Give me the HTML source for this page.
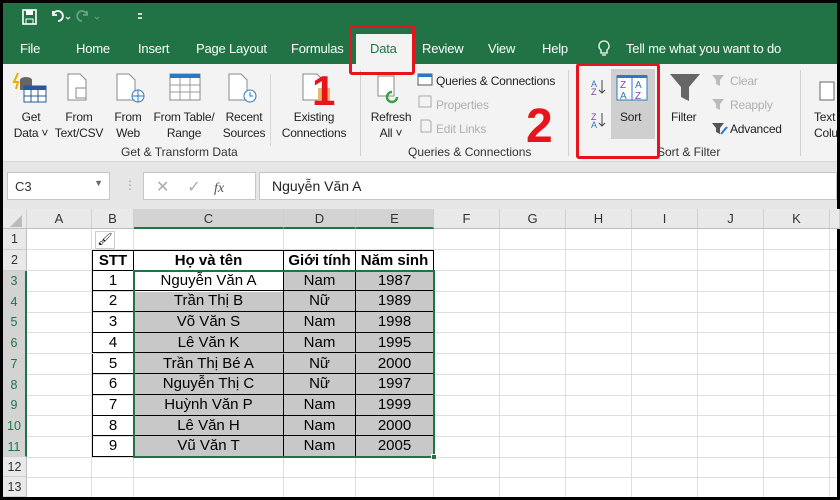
<!DOCTYPE html><html><head><meta charset="utf-8"><style>
*{margin:0;padding:0;box-sizing:border-box}
body{width:840px;height:500px;background:#000;font-family:"Liberation Sans",Arial,sans-serif;position:relative;overflow:hidden}
.a{position:absolute}
#top{left:3px;top:3px;width:834px;height:61px;background:#217346}
.tab{position:absolute;top:41px;color:#fff;font-size:13px;letter-spacing:-0.2px}
#rib{left:3px;top:64px;width:834px;height:98px;background:#f3f3f3;border-bottom:1px solid #d6d6d6}
.rt{position:absolute;font-size:12px;color:#222;text-align:center;line-height:16px;letter-spacing:-0.2px;white-space:nowrap}
.gl{position:absolute;top:145px;font-size:12px;color:#333}
#fb{left:3px;top:162px;width:834px;height:47px;background:#e6e6e6}
.box{position:absolute;background:#fff;border:1px solid #c6c6c6}
#grid{left:3px;top:209px;width:834px;height:288px;background:#fff}
.ch{position:absolute;top:0;height:20px;background:#e9e9e9;border-right:1px solid #cfcfcf;border-bottom:1px solid #bdbdbd;font-size:13px;color:#333;text-align:center;line-height:20px}
.rh{position:absolute;left:0;width:24px;background:#e9e9e9;border-bottom:1px solid #cfcfcf;border-right:1px solid #bdbdbd;font-size:12.5px;color:#333;text-align:center}
.vl{position:absolute;top:20px;width:1px;height:268px;background:#dedede}
.hl{position:absolute;left:24px;height:1px;width:810px;background:#dedede}
.c{position:absolute;font-size:15px;color:#000;text-align:center;border:1px solid #000;border-width:0 1px 1px 0}
.red{position:absolute;border:3px solid #e8141c;border-radius:3px}
</style></head><body>
<div id="top" class="a"></div>
<svg class="a" style="left:20px;top:8px" width="130" height="18" viewBox="0 0 130 18"><rect x="3" y="2" width="13" height="14" fill="none" stroke="#fff" stroke-width="1.6"/><rect x="6" y="2" width="7" height="5" fill="#fff"/><rect x="6" y="11" width="7" height="5" fill="none" stroke="#fff"/><path d="M38 13a5 5 0 1 0-5-6M33 3v4h4" fill="none" stroke="#fff" stroke-width="1.8"/><path d="M46 9l2 2 2-2" stroke="#fff" fill="none"/><path d="M62 13a5 5 0 1 1 5-6M67 3v4h-4" fill="none" stroke="#6a9f80" stroke-width="1.8"/><path d="M75 9l2 2 2-2" stroke="#6a9f80" fill="none"/><path d="M118 6h4M118 10h4" stroke="#fff" stroke-width="1.5"/></svg>
<div class="tab" style="left:20px">File</div><div class="tab" style="left:76px">Home</div><div class="tab" style="left:138px">Insert</div><div class="tab" style="left:196px">Page Layout</div><div class="tab" style="left:291px">Formulas</div>
<div class="a" style="left:356px;top:34px;width:56px;height:30px;background:#f3f3f3"></div><div class="tab" style="left:370px;color:#217346">Data</div>
<div class="tab" style="left:422px">Review</div><div class="tab" style="left:488px">View</div><div class="tab" style="left:542px">Help</div>
<svg class="a" style="left:597px;top:40px" width="14" height="18"><path d="M7 1a5 5 0 0 0-3 9v3h6v-3a5 5 0 0 0-3-9zM5 15h4" fill="none" stroke="#fff" stroke-width="1.3"/></svg>
<div class="tab" style="left:626px">Tell me what you want to do</div>
<div id="rib" class="a"></div>
<svg class="a" style="left:12px;top:70px" width="820" height="40" viewBox="12 70 820 40">
<path d="M18 73l-4 9h4l-2 7" stroke="#f2a900" stroke-width="2" fill="none"/><ellipse cx="26" cy="80" rx="6" ry="3" fill="#666"/><rect x="20" y="80" width="12" height="10" fill="#666"/><rect x="24" y="86" width="22" height="16" fill="#fff" stroke="#2b579a"/><rect x="24" y="86" width="22" height="4" fill="#2b579a"/><path d="M31 90v12M38 90v12M24 96h22" stroke="#2b579a"/>
<path d="M68 74h12l6 6v20h-18z" fill="#fff" stroke="#888"/><rect x="76" y="88" width="10" height="10" fill="#fff" stroke="#888"/>
<path d="M117 74h12l6 6v20h-18z" fill="#fff" stroke="#888"/><circle cx="138" cy="96" r="6" fill="#fff" stroke="#2b79c2"/><path d="M132 96h12M138 90v12" stroke="#2b79c2"/>
<rect x="170" y="74" width="30" height="26" fill="#fff" stroke="#888"/><rect x="170" y="74" width="30" height="4" fill="#2b79c2"/><path d="M180 78v22M190 78v22M170 85h30M170 92h30" stroke="#999"/>
<path d="M229 74h12l6 6v20h-18z" fill="#fff" stroke="#888"/><circle cx="250" cy="96" r="6" fill="#fff" stroke="#2b79c2"/><path d="M250 92v4h3" stroke="#2b79c2" fill="none"/>
<path d="M303 74h14l6 6v20h-20z" fill="#fff" stroke="#888"/><rect x="318" y="88" width="12" height="14" fill="#e8b96b"/>
<rect x="378" y="76" width="16" height="20" fill="#fff" stroke="#888"/><path d="M392 92a5 5 0 1 0 5 5" stroke="#3aa04a" stroke-width="2.5" fill="none"/>
<rect x="418" y="74" width="14" height="11" fill="#fff" stroke="#555"/><rect x="418" y="74" width="14" height="3" fill="#2b79c2"/>
</svg>
<div class="rt" style="left:12px;top:109px;width:38px">Get<br>Data ˅</div>
<div class="rt" style="left:53px;top:109px;width:52px">From<br>Text/CSV</div>
<div class="rt" style="left:110px;top:109px;width:36px">From<br>Web</div>
<div class="rt" style="left:150px;top:109px;width:68px">From Table/<br>Range</div>
<div class="rt" style="left:220px;top:109px;width:48px">Recent<br>Sources</div>
<div class="rt" style="left:277px;top:109px;width:74px">Existing<br>Connections</div>
<div class="gl" style="left:121px">Get &amp; Transform Data</div>
<div class="a" style="left:360px;top:70px;width:1px;height:86px;background:#d0d0d0"></div>
<div class="a" style="left:270px;top:74px;width:1px;height:72px;background:#d6d6d6"></div>
<div class="rt" style="left:367px;top:109px;width:48px">Refresh<br>All ˅</div>
<div class="rt" style="left:436px;top:73px;text-align:left">Queries &amp; Connections</div>
<div class="rt" style="left:436px;top:97px;color:#b0b0b0;text-align:left">Properties</div>
<div class="rt" style="left:436px;top:121px;color:#b0b0b0;text-align:left">Edit Links</div>
<svg class="a" style="left:418px;top:94px" width="16" height="44"><rect x="1" y="2" width="12" height="11" fill="none" stroke="#aaa"/><path d="M3 26h8l2 2v10H3z" fill="none" stroke="#aaa"/></svg>
<div class="gl" style="left:408px">Queries &amp; Connections</div>
<div class="a" style="left:568px;top:70px;width:1px;height:86px;background:#d0d0d0"></div>
<div class="a" style="left:611px;top:69px;width:44px;height:70px;background:#cfcfcf"></div>
<svg class="a" style="left:590px;top:74px" width="60" height="60"><text x="1" y="13" font-size="9" fill="#2b79c2" font-family="Liberation Sans">A</text><text x="1" y="21" font-size="9" fill="#7a3fb0" font-family="Liberation Sans">Z</text><path d="M12 6v13M9 16l3 3 3-3" stroke="#444" fill="none"/><text x="1" y="46" font-size="9" fill="#7a3fb0" font-family="Liberation Sans">Z</text><text x="1" y="54" font-size="9" fill="#2b79c2" font-family="Liberation Sans">A</text><path d="M12 39v13M9 49l3 3 3-3" stroke="#444" fill="none"/>
<rect x="27" y="2" width="30" height="24" fill="#fff" stroke="#2b79c2"/><rect x="27" y="1" width="30" height="3" fill="#2b79c2"/><path d="M42 4v22" stroke="#2b79c2"/><text x="30" y="14" font-size="10" fill="#7a3fb0" font-family="Liberation Sans">Z</text><text x="30" y="25" font-size="10" fill="#2b79c2" font-family="Liberation Sans">A</text><text x="45" y="14" font-size="10" fill="#2b79c2" font-family="Liberation Sans">A</text><text x="45" y="25" font-size="10" fill="#7a3fb0" font-family="Liberation Sans">Z</text></svg>
<div class="rt" style="left:620px;top:109px">Sort</div>
<svg class="a" style="left:668px;top:72px" width="36" height="32"><path d="M2 2h30l-11 13v14l-8-4V15z" fill="#666"/></svg>
<div class="rt" style="left:671px;top:109px">Filter</div>
<div class="rt" style="left:730px;top:73px;color:#b0b0b0">Clear</div>
<div class="rt" style="left:730px;top:97px;color:#b0b0b0">Reapply</div>
<div class="rt" style="left:730px;top:121px">Advanced</div>
<svg class="a" style="left:711px;top:73px" width="18" height="64"><path d="M1 2h12l-4 5v6l-4-2V7z" fill="#bbb"/><path d="M1 26h12l-4 5v6l-4-2v-4z" fill="#bbb"/><path d="M1 50h12l-4 5v6l-4-2v-4z" fill="#555"/><path d="M10 61l6-7" stroke="#2b79c2" stroke-width="2"/></svg>
<div class="gl" style="left:657px">Sort &amp; Filter</div>
<div class="a" style="left:800px;top:70px;width:1px;height:86px;background:#d0d0d0"></div>
<div class="rt" style="left:814px;top:109px;text-align:left">Text<br>Colu</div>
<svg class="a" style="left:818px;top:80px" width="20" height="24"><rect x="2" y="2" width="14" height="18" fill="#fff" stroke="#666"/></svg>
<div class="red" style="left:349px;top:25px;width:66px;height:50px"></div>
<div class="red" style="left:576px;top:63px;width:84px;height:96px"></div>
<div class="a" style="left:312px;top:70px;font-size:42px;font-weight:bold;color:#e8141c;line-height:42px">1</div>
<div class="a" style="left:526px;top:103px;font-size:48px;font-weight:bold;color:#e8141c;line-height:48px">2</div>
<div id="fb" class="a"></div>
<div class="box" style="left:7px;top:172px;width:103px;height:28px;font-size:13px;padding:6px 0 0 7px;color:#333">C3<span style="position:absolute;right:6px;top:5px;font-size:9px;color:#666">▼</span></div>
<div class="a" style="left:124px;top:178px;color:#999;font-size:12px">⋮</div>
<div class="box" style="left:143px;top:172px;width:113px;height:28px;color:#aaa;font-size:16px;padding:4px 0 0 12px">✕&nbsp;&nbsp;&nbsp;&nbsp;✓&nbsp;&nbsp;&nbsp;<i style="font-family:'Liberation Serif';color:#555;font-size:14px">fx</i></div>
<div class="box" style="left:259px;top:172px;width:578px;height:28px;font-size:14px;padding:5px 0 0 12px;color:#222">Nguyễn Văn A</div>
<div id="grid" class="a">
<div class="ch" style="left:0;width:24px"><svg width="24" height="20"><path d="M19 6v12H7z" fill="#bbb"/></svg></div>
<div class="ch" style="left:24px;width:65px">A</div><div class="ch" style="left:89px;width:42px">B</div>
<div class="ch" style="left:131px;width:150px;background:#d3d3d3;border-bottom:2px solid #217346">C</div>
<div class="ch" style="left:281px;width:72px;background:#d3d3d3;border-bottom:2px solid #217346">D</div>
<div class="ch" style="left:353px;width:78px;background:#d3d3d3;border-bottom:2px solid #217346">E</div>
<div class="ch" style="left:431px;width:66px">F</div><div class="ch" style="left:497px;width:66px">G</div><div class="ch" style="left:563px;width:66px">H</div><div class="ch" style="left:629px;width:66px">I</div><div class="ch" style="left:695px;width:66px">J</div><div class="ch" style="left:761px;width:66px">K</div><div class="ch" style="left:827px;width:10px"></div>
<div class="vl" style="left:88px"></div><div class="vl" style="left:130px"></div><div class="vl" style="left:280px"></div><div class="vl" style="left:352px"></div><div class="vl" style="left:430px"></div><div class="vl" style="left:496px"></div><div class="vl" style="left:562px"></div><div class="vl" style="left:628px"></div><div class="vl" style="left:694px"></div><div class="vl" style="left:760px"></div><div class="vl" style="left:826px"></div>
<div class="hl" style="top:40px"></div><div class="hl" style="top:61px"></div><div class="hl" style="top:82px"></div><div class="hl" style="top:103px"></div><div class="hl" style="top:123px"></div><div class="hl" style="top:144px"></div><div class="hl" style="top:165px"></div><div class="hl" style="top:186px"></div><div class="hl" style="top:206px"></div><div class="hl" style="top:227px"></div><div class="hl" style="top:248px"></div><div class="hl" style="top:268px"></div>
<div class="rh" style="top:20px;height:21px;line-height:20px">1</div><div class="rh" style="top:41px;height:21px;line-height:20px">2</div>
<div class="rh" style="top:62px;height:186px;background:#d3d3d3;border-right:2px solid #217346;color:#217346"></div>
<div class="a" style="left:0;top:62px;width:22px;font-size:12.5px;color:#217346;text-align:center;line-height:20.7px">3<br>4<br>5<br>6<br>7<br>8<br>9<br>10<br>11</div>
<div class="rh" style="top:248px;height:20px;line-height:20px">12</div><div class="rh" style="top:268px;height:20px;line-height:20px">13</div>
<div class="a" style="left:92px;top:22px;width:20px;height:18px;border:1px solid #ccc;background:#fff;font-size:12px;text-align:center">🖌</div>
<div class="a" style="left:131px;top:62px;width:300px;height:186px;background:#c8c8c8"></div>
<div class="a" style="left:131px;top:62px;width:150px;height:21px;background:#fff"></div>
<div id="tbl"></div>
<div class="a" style="left:130px;top:61px;width:302px;height:188px;border:2px solid #217346"></div>
<div class="a" style="left:428px;top:245px;width:6px;height:6px;background:#217346;border:1px solid #fff"></div>
</div>
<script>
var d=[["STT","Họ và tên","Giới tính","Năm sinh"],["1","Nguyễn Văn A","Nam","1987"],["2","Trần Thị B","Nữ","1989"],["3","Võ Văn S","Nam","1998"],["4","Lê Văn K","Nam","1995"],["5","Trần Thị Bé A","Nữ","2000"],["6","Nguyễn Thị C","Nữ","1997"],["7","Huỳnh Văn P","Nam","1999"],["8","Lê Văn H","Nam","2000"],["9","Vũ Văn T","Nam","2005"]];
var xs=[89,131,281,353,431],h="";
for(var r=0;r<10;r++){var t=41+r*20.7;for(var c=0;c<4;c++){h+='<div class="c" style="left:'+xs[c]+'px;top:'+t+'px;width:'+(xs[c+1]-xs[c])+'px;height:20.7px;line-height:20px;'+(r==0?'font-weight:bold;':'')+(r==0&&c==0?'border-top:1px solid #000;border-left:1px solid #000;':'')+(r==0&&c>0?'border-top:1px solid #000;':'')+(c==0&&r>0?'border-left:1px solid #000;':'')+'">'+d[r][c]+'</div>'}}
document.getElementById('tbl').outerHTML=h;
</script>
</body></html>
